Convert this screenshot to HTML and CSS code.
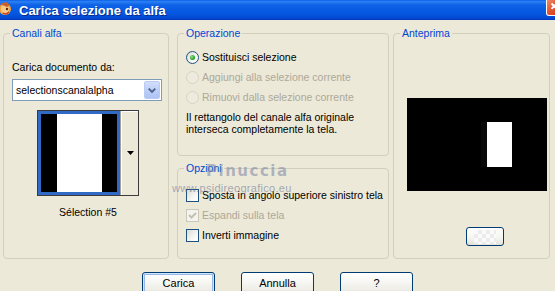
FILE: index.html
```html
<!DOCTYPE html>
<html lang="it">
<head>
<meta charset="utf-8">
<title>Carica selezione da alfa</title>
<link rel="stylesheet" href="styles.css">
</head>
<body>
<div class="window">
  <div class="titlebar">
    <svg class="app-icon" width="14" height="16" viewBox="0 0 14 16">
      <circle cx="5" cy="8" r="6" fill="#F0A040"/>
      <circle cx="5" cy="8" r="4" fill="#F7C98A"/>
      <path d="M0 3 L6 1 L10 4 L7 6 Z" fill="#C8602A"/>
      <circle cx="7" cy="8" r="1.2" fill="#5A2A10"/>
      <path d="M3 12 Q6 14 9 11" stroke="#C04020" stroke-width="1.2" fill="none"/>
    </svg>
    <span class="title">Carica selezione da alfa</span>
    <div class="close">
      <svg width="20" height="16" viewBox="0 0 20 16"><path d="M5 3 L11 9 M11 3 L5 9" stroke="#fff" stroke-width="2.2" fill="none"/></svg>
    </div>
  </div>

  <div class="main">
    <div class="group g-alpha">
      <div class="gtitle">Canali alfa</div>
      <div class="label">Carica documento da:</div>
      <div class="combo">
        <span class="combo-text">selectionscanalalpha</span>
        <span class="combo-btn">
          <svg width="15" height="19" viewBox="0 0 15 19"><path d="M4 7.5 L7.5 11 L11 7.5" stroke="#4D6185" stroke-width="2" fill="none"/></svg>
        </span>
      </div>
      <div class="thumb">
        <div class="thumb-img">
          <div class="bar-left"></div>
          <div class="bar-white"></div>
          <div class="bar-right"></div>
        </div>
        <div class="thumb-side">
          <svg width="7" height="4" viewBox="0 0 7 4"><path d="M0 0 H7 L3.5 4 Z" fill="#000"/></svg>
        </div>
      </div>
      <div class="caption">Sélection #5</div>
    </div>

    <div class="col-mid">
      <div class="group g-op">
        <div class="gtitle">Operazione</div>
        <div class="opts">
          <div class="row"><span class="radio checked"></span><span>Sostituisci selezione</span></div>
          <div class="row disabled"><span class="radio"></span><span>Aggiungi alla selezione corrente</span></div>
          <div class="row disabled"><span class="radio"></span><span>Rimuovi dalla selezione corrente</span></div>
        </div>
        <p class="info">Il rettangolo del canale alfa originale<br>interseca completamente la tela.</p>
      </div>
      <div class="group g-opt">
        <div class="gtitle">Opzioni</div>
        <div class="checks">
          <div class="row"><span class="check"></span><span>Sposta in angolo superiore sinistro tela</span></div>
          <div class="row disabled"><span class="check on">
            <svg width="11" height="11" viewBox="0 0 11 11"><path d="M2 5 L4.5 7.5 L9 3" stroke="#C3C0B2" stroke-width="2" fill="none"/></svg>
          </span><span>Espandi sulla tela</span></div>
          <div class="row"><span class="check"></span><span>Inverti immagine</span></div>
        </div>
      </div>
    </div>

    <div class="group g-prev">
      <div class="gtitle">Anteprima</div>
      <div class="preview"><div class="preview-sel"></div></div>
      <div class="small-btn"><span class="checker"></span></div>
    </div>
  </div>

  <div class="buttons">
    <div class="btn default">Carica</div>
    <div class="btn">Annulla</div>
    <div class="btn">?</div>
  </div>

  <div class="watermark">
    <div class="wm1">Pinuccia</div>
    <div class="wm2">www.psidireografico.eu</div>
  </div>
</div>
</body>
</html>
```

FILE: styles.css
```css
* { box-sizing: border-box; }
html, body { margin: 0; padding: 0; }
body {
  width: 555px;
  height: 291px;
  overflow: hidden;
  background: #ECE9D8;
  font-family: "Liberation Sans", Arial, sans-serif;
  font-size: 10.5px;
  color: #000;
}
.window { position: relative; width: 555px; height: 291px; overflow: hidden; }

.titlebar {
  height: 20px;
  display: flex;
  align-items: center;
  background: linear-gradient(to bottom, #0A5FE6 0%, #2C80F4 8%, #0D62E6 25%, #0558E2 65%, #0449D2 90%, #0238BA 100%);
}
.app-icon { flex: none; align-self: flex-start; margin-top: 1px; }
.title {
  margin-left: 5px;
  color: #fff;
  font-weight: bold;
  font-size: 13px;
  text-shadow: 1px 1px 0 #0A2A8A;
  flex: 1;
}
.close {
  flex: none;
  align-self: flex-start;
  width: 20px;
  height: 16px;
  margin-right: -11px;
  border: 1px solid #fff;
  border-top: none;
  border-radius: 0 0 3px 3px;
  background: linear-gradient(135deg, #F08A6A 0%, #E0502C 45%, #C83A14 100%);
  display: flex;
}

.main {
  display: flex;
  padding: 13px 0 0 3px;
  height: 239px;
}
.group {
  border: 1px solid #D0D0BF;
  border-radius: 4px;
}
.gtitle {
  margin: -7px 0 0 6px;
  padding: 0 2px;
  width: fit-content;
  line-height: 12px;
  height: 12px;
  background: #ECE9D8;
  color: #0046D5;
}

/* Column 1 */
.g-alpha { width: 166px; height: 226px; }
.label { margin: 22px 0 0 8px; line-height: 13px; }
.combo {
  margin: 5px 0 0 8px;
  width: 150px;
  height: 22px;
  background: #fff;
  border: 1px solid #7F9DB9;
  display: flex;
  align-items: center;
  padding: 0 1px 0 3px;
}
.combo-text { flex: 1; line-height: 13px; }
.combo-btn {
  flex: none;
  width: 16px;
  height: 18px;
  border-radius: 2px;
  background: linear-gradient(to bottom, #D2DEFC 0%, #BCCEF9 50%, #AFC4F6 100%);
  border: 1px solid #B9CBF3;
  display: flex;
  align-items: center;
  justify-content: center;
}
.combo-btn svg { display: block; }
.thumb {
  margin: 9px 0 0 33px;
  width: 102px;
  height: 86px;
  border: 1px solid #3C3C3C;
  display: flex;
}
.thumb-img {
  width: 82px;
  border: 3px solid #316AC5;
  display: flex;
}
.bar-left { width: 16px; background: #000; }
.bar-white { width: 45px; background: #fff; }
.bar-right { flex: 1; background: #000; }
.thumb-side {
  flex: 1;
  border-left: 1px solid #A0A0A0;
  box-shadow: inset 1px 1px 0 #fff;
  background: #ECE9D8;
  display: flex;
  align-items: center;
  justify-content: center;
}
.thumb-side svg { display: block; margin-left: 1px; }
.caption {
  margin: 10px 0 0 33px;
  width: 102px;
  text-align: center;
  line-height: 13px;
}

/* Column 2 */
.col-mid {
  margin-left: 8px;
  width: 212px;
  display: flex;
  flex-direction: column;
  gap: 12px;
}
.g-op { height: 123px; }
.g-opt { height: 91px; }
.opts { margin-top: 8px; }
.checks { margin-top: 11px; }
.row {
  height: 20px;
  display: flex;
  align-items: center;
  gap: 3px;
  padding-left: 8px;
}
.row.disabled { color: #ACA899; }
.radio {
  flex: none;
  width: 13px;
  height: 13px;
  border-radius: 50%;
  border: 1px solid #1C5180;
  background: linear-gradient(135deg, #DCDBD5 0%, #F6F6F3 60%, #FFFFFF 100%);
  display: flex;
  align-items: center;
  justify-content: center;
}
.radio.checked::after {
  content: "";
  width: 5px;
  height: 5px;
  border-radius: 50%;
  background: radial-gradient(circle at 35% 35%, #8DE08D 0%, #2BA42B 60%, #1D8A1D 100%);
}
.row.disabled .radio {
  border-color: #D6D3C6;
  background: #EEEBDE;
}
.info {
  margin: 4px 0 0 0;
  padding-left: 8px;
  line-height: 12px;
}
.check {
  flex: none;
  width: 13px;
  height: 13px;
  border: 1px solid #1C5180;
  background: linear-gradient(135deg, #DCDBD5 0%, #F6F6F3 60%, #FFFFFF 100%);
  display: flex;
  align-items: center;
  justify-content: center;
}
.check svg { display: block; }
.row.disabled .check {
  border-color: #CAC8BB;
  background: #F4F3EE;
}

/* Column 3 */
.g-prev {
  margin-left: 4px;
  width: 157px;
  height: 226px;
}
.preview {
  margin: 59px 0 0 13px;
  width: 140px;
  height: 93px;
  background: #000;
  padding: 24px 0 0 80px;
}
.preview-sel {
  width: 25px;
  height: 45px;
  background: #fff;
  box-shadow: -6px 0 0 #080808;
}
.small-btn {
  margin: 36px 0 0 72px;
  width: 38px;
  height: 19px;
  border: 1px solid #003C74;
  border-radius: 3px;
  background: linear-gradient(to bottom, #FFFFFF 0%, #F4F4F0 60%, #E3E1D8 100%);
  display: flex;
  align-items: center;
  justify-content: center;
}
.checker {
  width: 22px;
  height: 14px;
  background: repeating-conic-gradient(#ECECEC 0 25%, #FAFAFA 0 50%) 0 0 / 8px 8px;
}

/* Buttons */
.buttons {
  margin-top: 13px;
  display: flex;
  justify-content: center;
  gap: 26px;
}
.btn {
  flex: none;
  width: 73px;
  height: 23px;
  border: 1px solid #003C74;
  border-radius: 3px;
  background: linear-gradient(to bottom, #FFFFFF 0%, #F7F7F4 40%, #EEEDE6 80%, #D8D3C6 100%);
  display: flex;
  align-items: center;
  justify-content: center;
  line-height: 13px;
  font-size: 11px;
}
.btn.default {
  box-shadow: inset 0 0 0 1px #CEE7FF, inset 0 0 0 2px #98B8EA;
}

/* Watermark overlay */
.watermark {
  position: absolute;
  left: 172px;
  top: 162px;
  pointer-events: none;
}
.wm1 {
  margin-left: 34px;
  font-family: "DejaVu Sans", sans-serif;
  font-weight: bold;
  font-size: 15px;
  letter-spacing: 1.5px;
  line-height: 18px;
  color: rgba(120, 130, 165, 0.55);
}
.wm2 {
  margin-top: 2px;
  font-size: 11px;
  letter-spacing: 0.3px;
  line-height: 12px;
  color: rgba(110, 118, 150, 0.6);
}
```
